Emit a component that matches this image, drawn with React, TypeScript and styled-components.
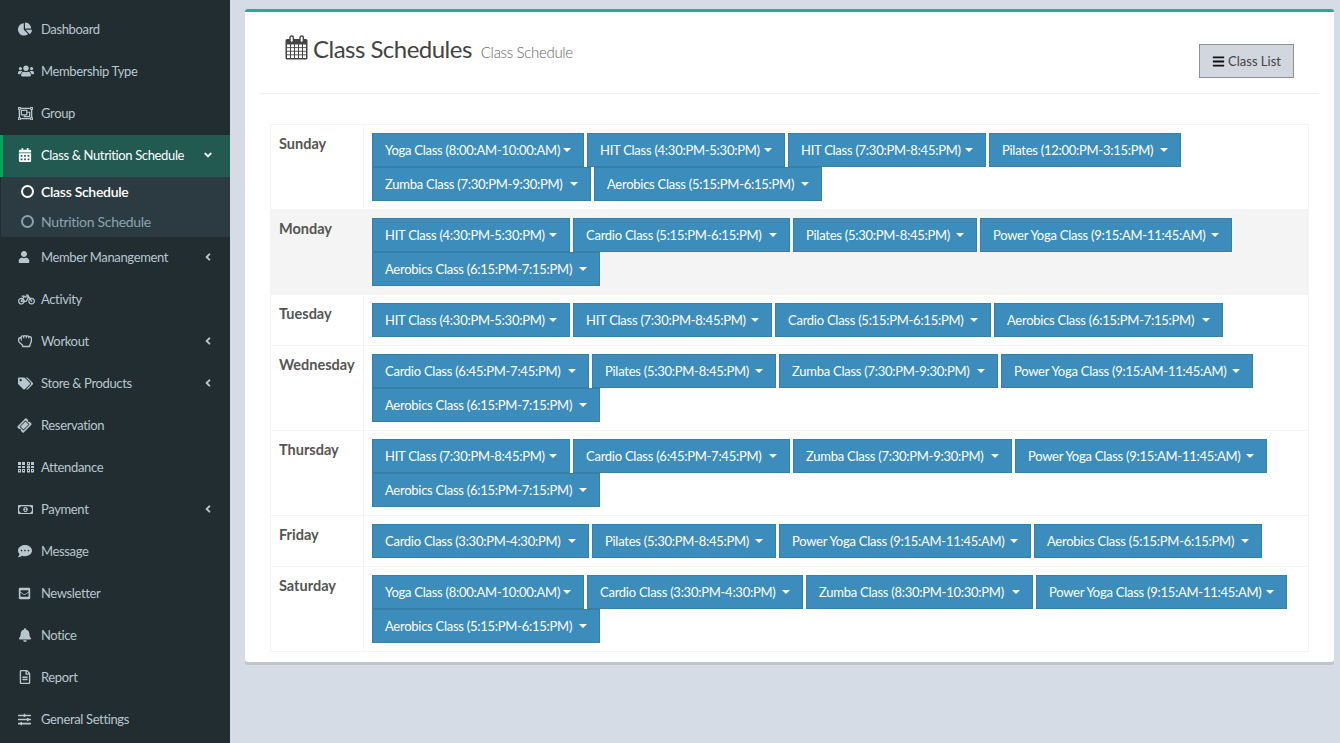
import React from "react";
import styled, { createGlobalStyle } from "styled-components";
import {
  FaChartPie, FaUsers, FaRegObjectGroup, FaCalendarAlt, FaUser, FaBicycle, FaRegHandRock, FaTags,
  FaTicketAlt, FaRegMoneyBillAlt, FaCommentDots, FaEnvelopeSquare, FaBell, FaRegFileAlt, FaSlidersH,
  FaAngleLeft, FaAngleDown, FaBars,
} from "react-icons/fa";

const UI = `"Lato", "Noto Sans", sans-serif`;

const Global = createGlobalStyle`
  html, body { margin: 0; padding: 0; height: 743px; overflow: hidden; background: #d6dce6; }
  * { box-sizing: border-box; }
  body { font-family: ${UI}; font-size: 13px; color: #444; }
`;

const Page = styled.div`display: flex; height: 743px;`;
const Sidebar = styled.nav`width: 230px; flex: none; background: #222d32; padding-top: 8px; height: 743px; overflow: hidden;`;
const MenuItem = styled.div<{ $active?: boolean }>`
  height: 42px; display: flex; align-items: center; font-size: 13px; color: ${p => (p.$active ? "#fff" : "#b8c7ce")};
  background: ${p => (p.$active ? "#225a52" : "transparent")};
  border-left: 3px solid ${p => (p.$active ? "#00a65a" : "transparent")};
  padding-left: 15px; margin-top: ${p => (p.$active ? "1px" : "0")};
  padding-bottom: ${p => (p.$active ? "2px" : "0")};
  margin-bottom: ${p => (p.$active ? "-1px" : "0")};
`;
const IconSlot = styled.span`width: 23px; flex: none; display: flex; align-items: center; font-size: 14px;`;
const Label = styled.span`flex: 1; white-space: nowrap; letter-spacing: -0.36px;`;
const Arrow = styled.span`width: 28px; flex: none; display: flex; align-items: center; font-size: 12px;`;
const SubMenu = styled.div`background: #2c3b41; height: 60px; margin-left: 1px; position: relative; top: 1px;`;
const SubItem = styled.div<{ $active?: boolean }>`
  height: 30px; display: flex; align-items: center; padding: 0 0 2px 20px; font-size: 14px; letter-spacing: -0.3px;
  color: ${p => (p.$active ? "#fff" : "#8aa4af")}; font-weight: ${p => (p.$active ? 600 : 400)};
`;
const Ring = styled.span`width: 13px; height: 13px; border-radius: 50%; border: 2.4px solid currentColor; margin-right: 7px; flex: none;`;
const TicketTilt = styled.span`display: flex; transform: rotate(-45deg);`;

const Main = styled.main`flex: 1; min-width: 0; padding: 9px 6px 0 15px;`;
const Card = styled.section`
  background: #fff; border-top: 3px solid #1fb094; border-radius: 3px; height: 653px; padding: 0 15px;
  box-shadow: 0 3px 0 rgba(0,0,0,.1);
`;
const Header = styled.header`height: 82px; border-bottom: 1px solid #f0f0f0; display: flex; position: relative; padding-left: 25px; padding-top: 23px;`;
const Title = styled.h1`margin: 0; font-size: 24px; font-weight: 400; letter-spacing: -0.52px; color: #444; line-height: 28px; display: flex; align-items: center; height: 28px; white-space: nowrap;`;
const Sub = styled.small`font-size: 15px; font-weight: 300; color: #666; margin-left: 9px; position: relative; top: 3px; letter-spacing: -0.3px;`;
const ListButton = styled.button`
  position: absolute; left: 939px; top: 32px; width: 95px; height: 34px; background: #d2d6de; border: 1px solid #8e8e93;
  font: 400 13px ${UI}; color: #444; display: flex; align-items: center; justify-content: center; gap: 3px; padding: 0;
  svg { color: #111; font-size: 13px; }
`;
const TableBox = styled.div`margin: 30px 10px 0; border: 1px solid #f4f4f4;`;
const Row = styled.div<{ $striped?: boolean }>`
  display: flex; background: ${p => (p.$striped ? "#f4f4f4" : "#fff")};
  & + & { border-top: 1px solid #f4f4f4; }
`;
const Day = styled.div`width: 93px; flex: none; padding: 10px 8px 0; font-weight: 700; font-size: 14.5px; color: #555; border-right: 1px solid #f4f4f4; line-height: 18px; white-space: nowrap;`;
const Slots = styled.div`flex: 1; padding: 8px; display: flex; flex-wrap: wrap; column-gap: 3px;`;
const SlotButton = styled.button<{ $w: number }>`
  width: ${p => p.$w}px; height: 34px; background: #3c8dbc; border: 1px solid #367fa9; color: #fff; font: 400 13px ${UI};
  display: flex; align-items: center; justify-content: space-between; padding: 0 12px; white-space: nowrap; letter-spacing: -0.26px;
`;
const Caret = styled.span`width: 0; height: 0; border-left: 4px solid transparent; border-right: 4px solid transparent; border-top: 4px solid #fff; flex: none;`;

const AttendanceIcon = () => (
  <svg width="16" height="11" viewBox="0 0 16 11" fill="currentColor">
    <rect x="0" y="0" width="3" height="3" /><rect x="4" y="0" width="3" height="3" /><rect x="0" y="4" width="3" height="2" /><rect x="4" y="4" width="3" height="2" />
    <rect x="0.5" y="7.5" width="2" height="2.5" fill="none" stroke="currentColor" /><rect x="4.5" y="7.5" width="2" height="2.5" fill="none" stroke="currentColor" />
    <rect x="9.5" y="0.5" width="2" height="2" fill="none" stroke="currentColor" /><rect x="13" y="0" width="3" height="3" /><rect x="9.5" y="4" width="2" height="2" fill="none" stroke="currentColor" /><rect x="13" y="4" width="3" height="2" />
    <rect x="9.5" y="7.5" width="2" height="2.5" fill="none" stroke="currentColor" /><rect x="13.5" y="7.5" width="2" height="2.5" fill="none" stroke="currentColor" />
  </svg>
);
const TitleCalendar = () => (
  <svg width="23" height="25" viewBox="0 0 23 25" style={{ marginRight: 5, marginTop: -4 }}>
    <rect x="0.5" y="4" width="22" height="20.5" rx="1.5" fill="#444" />
    <g fill="#fff">
      {[0, 1, 2, 3, 4].flatMap(c => [0, 1, 2, 3].map(r => (
        <rect key={`${c}-${r}`} x={2 + c * 4} y={9.5 + r * 3.6} width="3" height="2.7" />
      )))}
    </g>
    <rect x="5" y="1" width="3.4" height="6.5" rx="1.7" fill="#fff" stroke="#444" strokeWidth="1.4" />
    <rect x="15" y="1" width="3.4" height="6.5" rx="1.7" fill="#fff" stroke="#444" strokeWidth="1.4" />
  </svg>
);

const menuTop = [
  { icon: <FaChartPie />, label: "Dashboard" },
  { icon: <FaUsers size={16} />, label: "Membership Type" },
  { icon: <FaRegObjectGroup size={15} />, label: "Group" },
];
const menuBottom = [
  { icon: <FaUser size={12} />, label: "Member Manangement", arrow: true },
  { icon: <FaBicycle size={17} />, label: "Activity" },
  { icon: <FaRegHandRock />, label: "Workout", arrow: true },
  { icon: <FaTags size={15} />, label: "Store & Products", arrow: true },
  { icon: <TicketTilt><FaTicketAlt size={13} /></TicketTilt>, label: "Reservation" },
  { icon: <AttendanceIcon />, label: "Attendance" },
  { icon: <FaRegMoneyBillAlt size={15} />, label: "Payment", arrow: true },
  { icon: <FaCommentDots />, label: "Message" },
  { icon: <FaEnvelopeSquare size={13} />, label: "Newsletter" },
  { icon: <FaBell />, label: "Notice" },
  { icon: <FaRegFileAlt />, label: "Report" },
  { icon: <FaSlidersH size={13} />, label: "General Settings" },
];

type Slot = [string, number];
const yoga: Slot = ["Yoga Class (8:00:AM-10:00:AM)", 212];
const hit1: Slot = ["HIT Class (4:30:PM-5:30:PM)", 198];
const hit2: Slot = ["HIT Class (7:30:PM-8:45:PM)", 198];
const pil53: Slot = ["Pilates (5:30:PM-8:45:PM)", 184];
const pow: Slot = ["Power Yoga Class (9:15:AM-11:45:AM)", 252];
const aer5: Slot = ["Aerobics Class (5:15:PM-6:15:PM)", 228];
const aer6: Slot = ["Aerobics Class (6:15:PM-7:15:PM)", 228];
const car5: Slot = ["Cardio Class (5:15:PM-6:15:PM)", 217];
const car6: Slot = ["Cardio Class (6:45:PM-7:45:PM)", 217];
const car3: Slot = ["Cardio Class (3:30:PM-4:30:PM)", 217];
const zum: Slot = ["Zumba Class (7:30:PM-9:30:PM)", 219];

const days: { day: string; slots: Slot[] }[] = [
  { day: "Sunday", slots: [yoga, hit1, hit2, ["Pilates (12:00:PM-3:15:PM)", 192], zum, aer5] },
  { day: "Monday", slots: [hit1, car5, pil53, pow, aer6] },
  { day: "Tuesday", slots: [hit1, ["HIT Class (7:30:PM-8:45:PM)", 199], ["Cardio Class (5:15:PM-6:15:PM)", 216], ["Aerobics Class (6:15:PM-7:15:PM)", 229]] },
  { day: "Wednesday", slots: [car6, pil53, zum, pow, aer6] },
  { day: "Thursday", slots: [hit2, car6, zum, pow, aer6] },
  { day: "Friday", slots: [car3, pil53, pow, aer5] },
  { day: "Saturday", slots: [yoga, ["Cardio Class (3:30:PM-4:30:PM)", 216], ["Zumba Class (8:30:PM-10:30:PM)", 227], ["Power Yoga Class (9:15:AM-11:45:AM)", 251], aer5] },
];

export default function App() {
  return (
    <Page>
      <Global />
      <Sidebar>
        {menuTop.map(m => (
          <MenuItem key={m.label}><IconSlot>{m.icon}</IconSlot><Label>{m.label}</Label></MenuItem>
        ))}
        <MenuItem $active>
          <IconSlot><FaCalendarAlt /></IconSlot>
          <Label>Class &amp; Nutrition Schedule</Label>
          <Arrow><FaAngleDown /></Arrow>
        </MenuItem>
        <SubMenu>
          <SubItem $active><Ring />Class Schedule</SubItem>
          <SubItem><Ring />Nutrition Schedule</SubItem>
        </SubMenu>
        {menuBottom.map(m => (
          <MenuItem key={m.label}>
            <IconSlot>{m.icon}</IconSlot><Label>{m.label}</Label>
            {m.arrow && <Arrow><FaAngleLeft /></Arrow>}
          </MenuItem>
        ))}
      </Sidebar>
      <Main>
        <Card>
          <Header>
            <Title><TitleCalendar />Class Schedules<Sub>Class Schedule</Sub></Title>
            <ListButton><FaBars />Class List</ListButton>
          </Header>
          <TableBox>
            {days.map((d, i) => (
              <Row key={d.day} $striped={i === 1}>
                <Day>{d.day}</Day>
                <Slots>
                  {d.slots.map(([t, w], j) => (
                    <SlotButton key={j} $w={w}>{t}<Caret /></SlotButton>
                  ))}
                </Slots>
              </Row>
            ))}
          </TableBox>
        </Card>
      </Main>
    </Page>
  );
}
